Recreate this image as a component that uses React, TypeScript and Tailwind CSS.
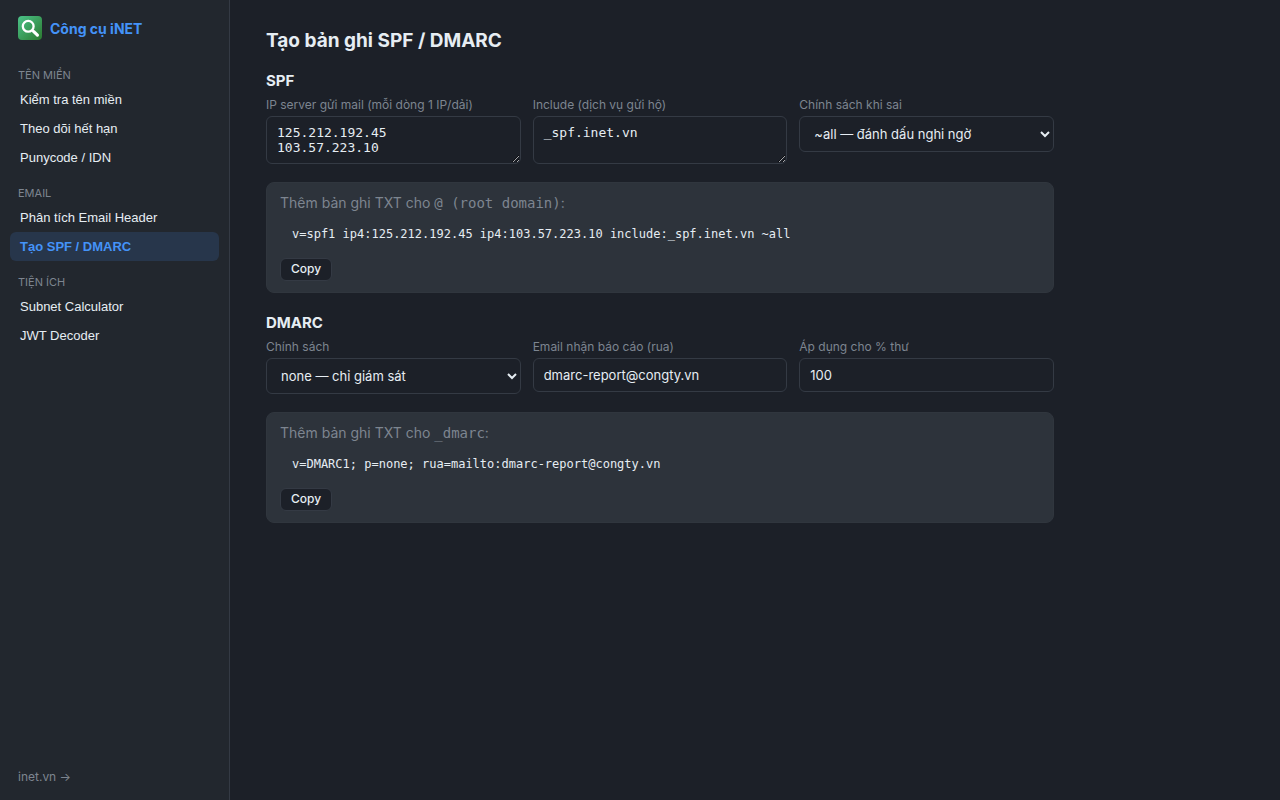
import { useState } from "react";

const groups = [
  { title: "Tên miền", items: ["Kiểm tra tên miền", "Theo dõi hết hạn", "Punycode / IDN"] },
  { title: "Email", items: ["Phân tích Email Header", "Tạo SPF / DMARC"] },
  { title: "Tiện ích", items: ["Subnet Calculator", "JWT Decoder"] },
];

const spfPolicies = [
  { value: "~all", label: "~all — đánh dấu nghi ngờ" },
  { value: "-all", label: "-all — từ chối" },
  { value: "?all", label: "?all — trung lập" },
];

const dmarcPolicies = [
  { value: "none", label: "none — chỉ giám sát" },
  { value: "quarantine", label: "quarantine — đưa vào spam" },
  { value: "reject", label: "reject — từ chối" },
];

const fieldClass =
  "block w-full rounded-md border border-[#343a44] bg-[#1c2028] px-2.5 text-[#e6edf3] outline-none focus:border-[#4493f8]";
const monoClass = "font-['DejaVu_Sans_Mono',monospace]";

function Logo() {
  return (
    <svg viewBox="0 0 24 24" className="size-6 shrink-0" aria-hidden="true">
      <defs>
        <linearGradient id="logo-bg" x1="0" y1="0" x2="1" y2="1">
          <stop offset="0" stopColor="#4cc38a" />
          <stop offset="1" stopColor="#2b7a2f" />
        </linearGradient>
      </defs>
      <rect width="24" height="24" rx="4" fill="url(#logo-bg)" />
      <circle cx="10.2" cy="10.3" r="5.4" fill="none" stroke="#fff" strokeWidth="2.3" />
      <path d="M14.2 14.2 L15.6 15.5" stroke="#fff" strokeWidth="2.4" />
      <path d="M15.8 15.7 L19.4 19.1" stroke="#fff" strokeWidth="3.2" strokeLinecap="round" />
    </svg>
  );
}

function Field({ id, label, children }: { id: string; label: string; children: React.ReactNode }) {
  return (
    <div className="min-w-0">
      <label htmlFor={id} className="mb-[3px] block text-xs text-[#7d8590]">
        {label}
      </label>
      {children}
    </div>
  );
}

function RecordCard({ host, value }: { host: string; value: string }) {
  return (
    <div className="mt-[18px] rounded-lg border border-[#30363e] bg-[#2d333b] px-[13px] pt-2.5 pb-[11px]">
      <p className="text-sm text-[#7d8590]">
        Thêm bản ghi TXT cho <code className={monoClass}>{host}</code>:
      </p>
      <pre className={`mt-px overflow-x-auto px-3 py-2.5 text-xs leading-5 text-[#e6edf3] ${monoClass}`}>{value}</pre>
      <button
        type="button"
        onClick={() => navigator.clipboard?.writeText(value)}
        className="mt-1 block h-[23px] rounded-md border border-[#343a44] bg-[#1c2028] px-2.5 pb-0.5 text-xs leading-4 font-medium text-[#e6edf3] hover:bg-[#22272e]"
      >
        Copy
      </button>
    </div>
  );
}

export default function App() {
  const [active, setActive] = useState("Tạo SPF / DMARC");
  const [ips, setIps] = useState("125.212.192.45\n103.57.223.10");
  const [includes, setIncludes] = useState("_spf.inet.vn");
  const [spfPolicy, setSpfPolicy] = useState("~all");
  const [dmarcPolicy, setDmarcPolicy] = useState("none");
  const [rua, setRua] = useState("dmarc-report@congty.vn");
  const [pct, setPct] = useState("100");

  const lines = (text: string) => text.split("\n").map((l) => l.trim()).filter(Boolean);

  const spf = [
    "v=spf1",
    ...lines(ips).map((ip) => `ip4:${ip}`),
    ...lines(includes).map((i) => `include:${i}`),
    spfPolicy,
  ].join(" ");

  const dmarc = [
    "v=DMARC1",
    `p=${dmarcPolicy}`,
    rua && `rua=mailto:${rua}`,
    pct && pct !== "100" && `pct=${pct}`,
  ]
    .filter(Boolean)
    .join("; ");

  return (
    <div className="flex min-h-screen bg-[#1c2028] font-['Inter',sans-serif] text-[#e6edf3]">
      {/* Sidebar */}
      <aside className="flex w-[230px] shrink-0 flex-col border-r border-[#343a44] bg-[#22272e] px-2.5 pt-4 pb-[15px]">
        <div className="mb-[27px] flex items-center gap-2 px-2">
          <Logo />
          <span className="pt-0.5 text-sm font-bold text-[#4493f8]">Công cụ iNET</span>
        </div>

        <nav className="flex flex-col gap-[13px]">
          {groups.map((group) => (
            <div key={group.title}>
              <h2 className="mb-px px-2 text-[11px] leading-[17px] text-[#7d8590] uppercase">{group.title}</h2>
              {group.items.map((item) => (
                <button
                  key={item}
                  type="button"
                  onClick={() => setActive(item)}
                  className={`block h-[29px] w-full rounded-md px-2.5 text-left font-['Liberation_Sans',Arial,sans-serif] text-[13px] ${
                    active === item ? "bg-[#27364b] font-bold text-[#4493f8]" : "hover:bg-[#2d333b]"
                  }`}
                >
                  {item}
                </button>
              ))}
            </div>
          ))}
        </nav>

        <a href="https://inet.vn" className="mt-auto px-2 text-xs text-[#7d8590] hover:text-[#4493f8]">
          inet.vn →
        </a>
      </aside>

      {/* Content */}
      <main className="min-w-0 max-w-[860px] flex-1 px-9 py-7">
        <h1 className="mb-[15px] text-[19px] leading-[26px] font-bold">Tạo bản ghi SPF / DMARC</h1>

        <section>
          <h2 className="mb-1 text-[15px] leading-6 font-bold">SPF</h2>
          <div className="grid grid-cols-3 items-start gap-3">
            <Field id="ips" label="IP server gửi mail (mỗi dòng 1 IP/dải)">
              <textarea
                id="ips"
                rows={2}
                value={ips}
                onChange={(e) => setIps(e.target.value)}
                className={`${fieldClass} ${monoClass} resize-y py-2 text-[13px] leading-[15px]`}
              />
            </Field>
            <Field id="includes" label="Include (dịch vụ gửi hộ)">
              <textarea
                id="includes"
                rows={2}
                value={includes}
                onChange={(e) => setIncludes(e.target.value)}
                className={`${fieldClass} ${monoClass} resize-y py-2 text-[13px] leading-[15px]`}
              />
            </Field>
            <Field id="spf-policy" label="Chính sách khi sai">
              <select
                id="spf-policy"
                value={spfPolicy}
                onChange={(e) => setSpfPolicy(e.target.value)}
                className={`${fieldClass} h-9 text-[13px]`}
              >
                {spfPolicies.map((p) => (
                  <option key={p.value} value={p.value}>
                    {p.label}
                  </option>
                ))}
              </select>
            </Field>
          </div>
          <RecordCard host="@ (root domain)" value={spf} />
        </section>

        <section className="mt-[18px]">
          <h2 className="mb-1 text-[15px] leading-6 font-bold">DMARC</h2>
          <div className="grid grid-cols-3 items-start gap-3">
            <Field id="dmarc-policy" label="Chính sách">
              <select
                id="dmarc-policy"
                value={dmarcPolicy}
                onChange={(e) => setDmarcPolicy(e.target.value)}
                className={`${fieldClass} h-9 text-[13px]`}
              >
                {dmarcPolicies.map((p) => (
                  <option key={p.value} value={p.value}>
                    {p.label}
                  </option>
                ))}
              </select>
            </Field>
            <Field id="rua" label="Email nhận báo cáo (rua)">
              <input
                id="rua"
                type="email"
                value={rua}
                onChange={(e) => setRua(e.target.value)}
                className={`${fieldClass} h-[34px] text-[13px]`}
              />
            </Field>
            <Field id="pct" label="Áp dụng cho % thư">
              <input
                id="pct"
                type="text"
                inputMode="numeric"
                value={pct}
                onChange={(e) => setPct(e.target.value)}
                className={`${fieldClass} h-[34px] text-[13px]`}
              />
            </Field>
          </div>
          <RecordCard host="_dmarc" value={dmarc} />
        </section>
      </main>
    </div>
  );
}
